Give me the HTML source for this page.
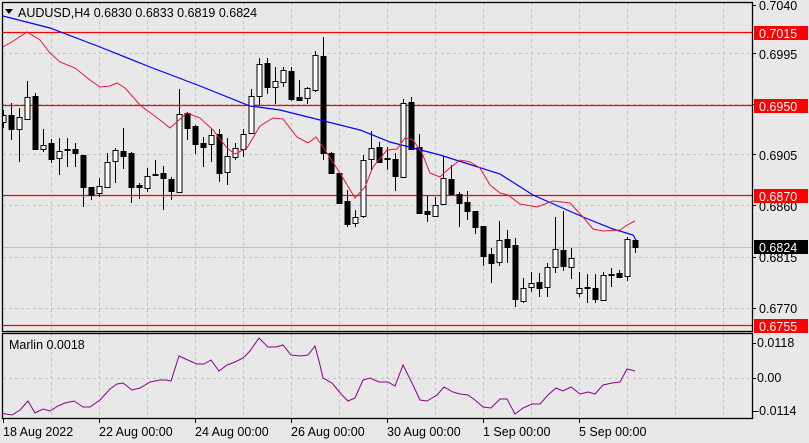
<!DOCTYPE html>
<html><head><meta charset="utf-8"><style>
html,body{margin:0;padding:0;background:#e8e8e8;}
svg{display:block;font-family:"Liberation Sans",sans-serif;}
</style></head><body>
<svg id="s" width="809" height="443" viewBox="0 0 809 443" xmlns="http://www.w3.org/2000/svg">
<rect width="809" height="443" fill="#e8e8e8"/>
<g id="grid" stroke="#c4c4c4" stroke-dasharray="3,3" stroke-width="1"></g>
<line x1="3" y1="247.5" x2="752" y2="247.5" stroke="#c0c0c0"/>
<g stroke="#ff0000" stroke-width="1.2">
<line x1="3" y1="32.5" x2="752" y2="32.5"/>
<line x1="3" y1="105.5" x2="752" y2="105.5"/>
<line x1="3" y1="195.5" x2="752" y2="195.5"/>
<line x1="3" y1="325.5" x2="752" y2="325.5"/>
</g>
<g id="candles"></g>
<polyline fill="none" stroke="#0000ff" stroke-width="1.2" points="3,16 50,28 100,47 150,67 200,86 250,106 280,110 320,120 360,130 390,142 440,155 500,174 533,195 583,217 613,229 633,235 636,240"/>
<polyline fill="none" stroke="#e8173c" stroke-width="1" points="3,47 15,40 27,32 40,40 50,53 60,62 75,68 90,80 100,87 110,86 117,83 125,88 140,105 160,120 170,128 187,113 200,118 213,130 227,148 235,154 247,148 260,126 273,118 283,119 297,137 308,143 316,137 323,147 340,173 355,198 365,187 373,167 387,150 397,149 405,138 413,140 422,153 430,173 440,177 445,172 460,160 470,162 480,168 490,185 500,193 508,195 520,204 537,207 553,201 570,203 583,217 593,229 603,231 620,230 627,225 635,221"/>
<polyline fill="none" stroke="#8b008b" stroke-width="1" points="0,413 12,415 20,410 28,401 35,413 43,409 50,411 58,406 65,403 74,401 83,407 90,407 100,400 110,389 117,384 123,383 132,390 140,388 150,382 160,380 166,380 171,381 179,356 190,361 197,364 204,364 211,360 219,371 227,365 235,362 243,358 250,351 259,338 268,347 276,347 283,345 291,355 300,356 308,355 315,346 320,365 323,378 332,383 342,395 348,401 355,398 363,380 370,378 379,382 388,382 395,386 403,365 412,383 420,400 427,401 437,395 444,387 453,392 460,394 468,395 475,400 483,407 491,408 500,399 507,399 515,414 523,408 532,404 540,404 548,395 556,388 563,391 571,387 580,394 588,392 595,394 603,385 612,383 620,382 627,369 635,371"/>
<rect x="0" y="0" width="3" height="443" fill="#e8e8e8"/>
<g fill="none" stroke="#000" stroke-width="1.3">
<rect x="2.5" y="2.5" width="750" height="329"/>
<rect x="2.5" y="333.5" width="750" height="85"/>
</g>
<g id="ticks" stroke="#000"></g>
<polygon points="5,9 13,9 9,14" fill="#000"/>
<text x="18" y="17" font-size="12.5" fill="#000">AUDUSD,H4  0.6830 0.6833 0.6819 0.6824</text>
<text x="9" y="349" font-size="12.5" fill="#000">Marlin 0.0018</text>
<g font-size="12.5" fill="#000">
<text x="759" y="10">0.7040</text>
<text x="759" y="59">0.6995</text>
<text x="759" y="160">0.6905</text>
<text x="759" y="211">0.6860</text>
<text x="759" y="262">0.6815</text>
<text x="759" y="313">0.6770</text>
<text x="757" y="347">0.0118</text>
<text x="757" y="382">0.00</text>
<text x="755" y="415">-0.0114</text>
</g>
<g font-size="12.5">
<rect x="754" y="26" width="54" height="14" fill="#ff0000"/><text x="759" y="38" fill="#fff">0.7015</text>
<rect x="754" y="99" width="54" height="14" fill="#ff0000"/><text x="759" y="111" fill="#fff">0.6950</text>
<rect x="754" y="189" width="54" height="14" fill="#ff0000"/><text x="759" y="201" fill="#fff">0.6870</text>
<rect x="754" y="240" width="54" height="14" fill="#000"/><text x="759" y="252" fill="#fff">0.6824</text>
<rect x="754" y="319" width="54" height="14" fill="#ff0000"/><text x="759" y="331" fill="#fff">0.6755</text>
</g>
<g font-size="12.5" fill="#000">
<text x="3" y="436">18 Aug 2022</text>
<text x="99" y="436">22 Aug 00:00</text>
<text x="195" y="436">24 Aug 00:00</text>
<text x="291" y="436">26 Aug 00:00</text>
<text x="387" y="436">30 Aug 00:00</text>
<text x="483" y="436">1 Sep 00:00</text>
<text x="579" y="436">5 Sep 00:00</text>
</g>
</svg>
<script>
var NS="http://www.w3.org/2000/svg";
function el(p,t,a){var e=document.createElementNS(NS,t);for(var k in a)e.setAttribute(k,a[k]);p.appendChild(e);return e;}
var g=document.getElementById('grid');
for(var x=51;x<752;x+=48){el(g,'line',{x1:x+.5,y1:3,x2:x+.5,y2:331});el(g,'line',{x1:x+.5,y1:334,x2:x+.5,y2:418});}
[53,104,154,205,257,308].forEach(function(y){el(g,'line',{x1:3,y1:y+.5,x2:752,y2:y+.5});});
el(g,'line',{x1:3,y1:378.5,x2:752,y2:378.5});
var t=document.getElementById('ticks');
[5,53,104,154,205,257,308,343,378,411].forEach(function(y){el(t,'line',{x1:752,y1:y+.5,x2:756,y2:y+.5});});
[3,99,195,291,387,483,579].forEach(function(x){el(t,'line',{x1:x+.5,y1:419,x2:x+.5,y2:423});});
var C=[[115,122,110,128,1],[115,129,103,140,0],[117,129,108,162,1],[97,119,81,119,1],[96,149,93,149,0],[145,149,129,152,1],[143,159,139,163,0],[151,158,138,175,1],[149,149,138,167,0],[149,153,143,167,0],
[155,187,155,207,0],[187,195,187,200,0],[186,193,178,197,1],[162,187,153,188,1],[150,161,148,183,1],[151,156,128,169,0],[153,187,152,203,0],[185,187,183,199,0],[176,188,168,192,1],[174,174,160,176,0],
[173,178,166,210,0],[179,191,177,200,0],[114,192,89,193,1],[113,128,112,140,0],[126,144,125,154,0],[143,147,137,167,0],[135,144,129,162,1],[134,173,129,182,0],[156,172,138,185,1],[148,157,143,160,1],
[134,149,129,157,1],[96,133,89,133,1],[64,96,58,105,1],[63,87,58,94,0],[81,87,67,104,1],[70,82,67,87,1],[71,99,67,101,0],[97,100,80,101,0],[88,98,87,104,1],[55,90,51,92,1],
[56,153,37,160,0],[153,173,152,173,0],[173,203,173,204,0],[201,224,190,227,0],[217,223,210,227,1],[160,216,155,218,1],[148,159,131,170,1],[147,162,142,163,0],[158,159,147,170,0],[159,176,153,191,0],
[103,177,99,177,1],[102,149,97,149,0],[147,213,134,213,0],[211,214,196,222,0],[205,216,197,217,1],[178,204,156,205,1],[179,194,165,195,0],[194,203,192,227,0],[202,211,191,220,0],[211,227,211,234,0],
[226,256,226,266,0],[254,263,248,283,0],[240,262,221,266,1],[239,247,230,263,0],[245,299,238,307,0],[288,301,278,303,1],[283,287,272,292,1],[282,288,273,297,0],[267,287,263,297,1],[249,267,217,273,1],
[250,266,211,271,0],[258,267,248,279,1],[288,293,272,297,1],[287,287,274,303,0],[288,299,274,303,0],[275,300,272,301,1],[274,274,268,287,0],[273,277,270,277,0],[239,276,237,281,1],[240,247,240,253,0]];
var cg=document.getElementById('candles');
C.forEach(function(c,i){var x=3+8*i;
el(cg,'line',{x1:x+.5,y1:c[2],x2:x+.5,y2:c[3],stroke:'#000'});
var h=Math.max(1,c[1]-c[0]);
if(c[4])el(cg,'rect',{x:x-2,y:c[0]+.5,width:5,height:h,fill:'#fff',stroke:'#000'});
else el(cg,'rect',{x:x-2.5,y:c[0],width:6,height:h+1,fill:'#000'});
});
</script>
</body></html>
